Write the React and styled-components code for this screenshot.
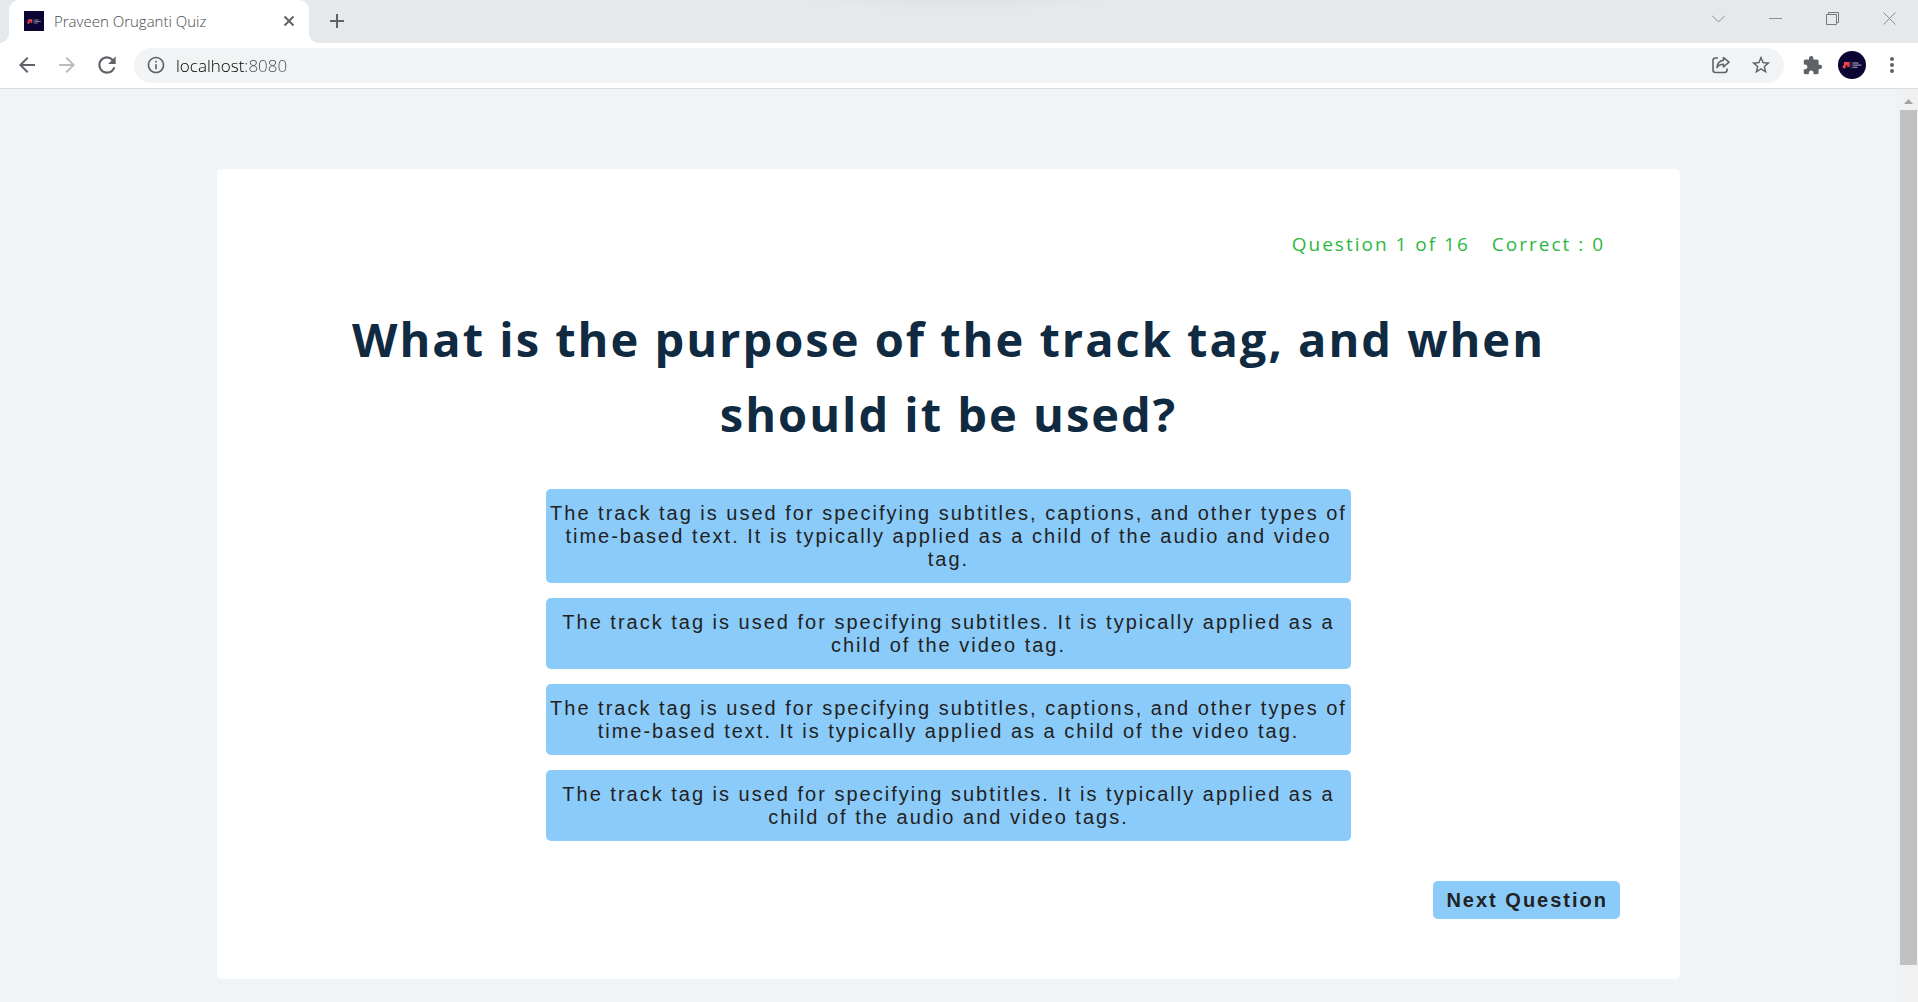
import React, { useState } from "react";
import styled, { createGlobalStyle, css } from "styled-components";
import {
  MdArrowBack,
  MdArrowForward,
  MdRefresh,
  MdInfoOutline,
  MdStarBorder,
  MdExtension,
} from "react-icons/md";

const uiFont = '"Open Sans", "Noto Sans", sans-serif';
const buttonFont = '"Liberation Sans", Arial, sans-serif';

const GlobalStyle = createGlobalStyle`
  *, *::before, *::after { box-sizing: border-box; }
  body { margin: 0; background: #f0f4f7; font-family: ${uiFont}; }
  button, input { font: inherit; margin: 0; padding: 0; border: 0; background: none; }
`;

const Window = styled.div`
  display: flex;
  flex-direction: column;
  height: 100vh;
  overflow: hidden;
`;

/* ---------- tab strip ---------- */

const TabStrip = styled.header`
  display: flex;
  align-items: stretch;
  flex: none;
  height: 43px;
  padding-left: 9px;
  background:
    radial-gradient(ellipse 150px 10px at 50% 0, #dde1e5, #e5e9ec) no-repeat,
    #e5e9ec;
`;

const Tab = styled.div`
  position: relative;
  display: flex;
  align-items: center;
  width: 300px;
  padding: 0 14px 2px 15px;
  border-radius: 10px 10px 0 0;
  background: #fff;

  &::before,
  &::after {
    content: "";
    position: absolute;
    bottom: 0;
    width: 10px;
    height: 10px;
  }
  &::before {
    right: 100%;
    background: radial-gradient(circle at 0 0, transparent 10px, #fff 10px);
  }
  &::after {
    left: 100%;
    background: radial-gradient(circle at 100% 0, transparent 10px, #fff 10px);
  }
`;

const TabTitle = styled.span`
  flex: 1;
  margin-left: 10px;
  font-size: 15px;
  line-height: 20px;
  font-weight: 300;
  color: #45494d;
`;

const IconButton = styled.button`
  display: flex;
  align-items: center;
  justify-content: center;
  flex: none;
  width: ${(p) => p.$width || 40}px;
  height: ${(p) => p.$height || 35}px;
  color: ${(p) => p.$color || "#5f6368"};
  svg { display: block; }
`;

const NewTabSlot = styled.div`
  display: flex;
  align-items: center;
  padding: 0 0 2px 8px;
`;

const WindowControls = styled.div`
  display: flex;
  align-items: center;
  margin-left: auto;
  padding-bottom: 6px;
`;

/* ---------- toolbar ---------- */

const Toolbar = styled.nav`
  display: flex;
  align-items: center;
  flex: none;
  height: 46px;
  padding: 0 6px 1px 7px;
  border-bottom: 1px solid #d9dcdf;
  background: #fff;
`;

const AddressBar = styled.div`
  display: flex;
  align-items: center;
  flex: 1;
  height: 35px;
  margin: 0 8px 0 7px;
  padding: 0 3px 0 12px;
  border-radius: 18px;
  background: #f1f3f4;
`;

const AddressInput = styled.input`
  flex: 1;
  min-width: 0;
  height: 24px;
  margin-left: 10px;
  font-size: 17px;
  font-weight: 300;
  color: #2a2d31;
  -webkit-text-fill-color: transparent;
  background: linear-gradient(90deg, #000 70px, #45494d 70px);
  -webkit-background-clip: text;
  background-clip: text;
  outline: none;
`;

/* ---------- page ---------- */

const Viewport = styled.div`
  display: flex;
  flex: 1;
  min-height: 0;
`;

const Page = styled.main`
  flex: 1;
  padding-top: 80px;
  overflow: hidden;
`;

const Card = styled.section`
  width: 90%;
  max-width: 1463px;
  margin: 0 auto;
  padding: 60px;
  border-radius: 5px;
  background: #fff;
`;

const Score = styled.p`
  display: flex;
  justify-content: flex-end;
  gap: 22px;
  margin: 0;
  padding-right: 15px;
  font-size: 19px;
  line-height: 31px;
  letter-spacing: 2px;
  color: #2cb840;
`;

const Question = styled.h1`
  margin: 42px 0 37px;
  font-size: 47px;
  line-height: 75px;
  font-weight: 700;
  letter-spacing: 2px;
  text-align: center;
  color: #102a42;
`;

const Answers = styled.div`
  display: grid;
  gap: 15px;
  width: 60%;
  margin: 0 auto;
`;

const buttonBase = css`
  border-radius: 5px;
  background: #8bcbf9;
  color: #222;
  font-family: ${buttonFont};
  font-size: 20px;
  line-height: 23px;
  letter-spacing: 2px;
  cursor: pointer;
`;

const Answer = styled.button`
  ${buttonBase}
  padding: 13px 2px 12px;
  text-align: center;
`;

const Footer = styled.div`
  display: flex;
  justify-content: flex-end;
  margin-top: 40px;
`;

const NextButton = styled.button`
  ${buttonBase}
  padding: 8px 12px 7px 13px;
  font-weight: 700;
`;

/* ---------- scrollbar ---------- */

const ScrollTrack = styled.div`
  display: flex;
  flex-direction: column;
  flex: none;
  width: 21px;
  padding: 0 1px 0 3px;
  background: #f1f1f1;
`;

const ScrollArrow = styled.div`
  display: flex;
  align-items: center;
  justify-content: center;
  height: 21px;
  padding-top: 3px;
`;

const ScrollThumb = styled.div`
  height: 96%;
  max-height: 855px;
  background: #c1c1c1;
`;

/* ---------- drawings ---------- */

const Line = ({ d, size, width = 1, ...rest }) => (
  <svg width={size} height={size} viewBox={`0 0 ${size} ${size}`} fill="none" stroke="currentColor" strokeWidth={width} {...rest}>
    <path d={d} />
  </svg>
);

const Mark = () => (
  <g>
    <path d="M11 10h11v10h-4.500v-4H11z" fill="#f0444b" />
    <circle cx="11.500" cy="19.500" r="3.500" fill="#f0444b" />
    <path d="M13 18.500l4-4" stroke="#f0444b" strokeWidth="2" />
    <path d="M25 9v15" stroke="#77738f" strokeWidth="1" />
    <path d="M28 12h12M28 16.200h18M28 20.500h10" stroke="#b9b6c8" strokeWidth="2" />
  </g>
);

const Favicon = () => (
  <svg width="20" height="20" viewBox="0 0 56 56" aria-hidden="true">
    <rect width="56" height="56" fill="#0c0433" />
    <g transform="translate(1 13)"><Mark /></g>
  </svg>
);

const Avatar = () => (
  <svg width="28" height="28" viewBox="0 0 56 56" aria-hidden="true">
    <circle cx="28" cy="28" r="28" fill="#0c0433" />
    <g transform="translate(1 12)"><Mark /></g>
  </svg>
);

const ShareIcon = () => (
  <svg width="20" height="20" viewBox="0 0 20 20" fill="none" stroke="currentColor" strokeWidth="1.600" strokeLinejoin="round">
    <path d="M7 3H4.500A2.500 2.500 0 0 0 2 5.500v9.500A2.500 2.500 0 0 0 4.500 17.500h9a2.500 2.500 0 0 0 2.500-2.500v-1.500" />
    <path d="M12.500 2.500l5.500 4.700-5.500 4.800V9.300c-3 0-5 .9-6.500 3.200.3-4 2.700-6.700 6.500-7.200z" />
  </svg>
);

const DotsIcon = () => (
  <svg width="6" height="18" viewBox="0 0 6 18" fill="currentColor">
    <circle cx="3" cy="3" r="2" />
    <circle cx="3" cy="9" r="2" />
    <circle cx="3" cy="15" r="2" />
  </svg>
);

const answers = [
  "The track tag is used for specifying subtitles, captions, and other types of time-based text. It is typically applied as a child of the audio and video tag.",
  "The track tag is used for specifying subtitles. It is typically applied as a child of the video tag.",
  "The track tag is used for specifying subtitles, captions, and other types of time-based text. It is typically applied as a child of the video tag.",
  "The track tag is used for specifying subtitles. It is typically applied as a child of the audio and video tags.",
];

export default function App() {
  const [url, setUrl] = useState("localhost:8080");

  return (
    <Window>
      <GlobalStyle />
      <TabStrip>
        <Tab>
          <Favicon />
          <TabTitle>Praveen Oruganti Quiz</TabTitle>
          <IconButton $width={12} $height={12} aria-label="Close tab">
            <Line size={12} width={2} d="M1.500 1.500l9 9M10.500 1.500l-9 9" />
          </IconButton>
        </Tab>
        <NewTabSlot>
          <IconButton aria-label="New tab">
            <Line size={16} width={2} d="M8 1v14M1 8h14" />
          </IconButton>
        </NewTabSlot>
        <WindowControls>
          <IconButton $width={57} $color="#8b8e91" aria-label="Search tabs">
            <Line size={13} d="M0 3.500l6.500 6.500L13 3.500" />
          </IconButton>
          <IconButton $width={57} $color="#8b8e91" aria-label="Minimize">
            <Line size={13} d="M0 6.500h13" />
          </IconButton>
          <IconButton $width={57} $color="#77797c" aria-label="Restore">
            <Line size={13} d="M0.500 2.500h10v10h-10zM2.500 2.500v-2h10v10h-2" />
          </IconButton>
          <IconButton $width={57} $color="#8b8e91" aria-label="Close window">
            <Line size={13} d="M0.500 0.500l12 12M12.500 0.500l-12 12" />
          </IconButton>
        </WindowControls>
      </TabStrip>

      <Toolbar>
        <IconButton aria-label="Back"><MdArrowBack size={24} /></IconButton>
        <IconButton $color="#babcbe" aria-label="Forward"><MdArrowForward size={24} /></IconButton>
        <IconButton aria-label="Reload"><MdRefresh size={26} /></IconButton>
        <AddressBar>
          <IconButton $width={20} aria-label="Site information"><MdInfoOutline size={20} /></IconButton>
          <AddressInput aria-label="Address" value={url} onChange={(e) => setUrl(e.target.value)} spellCheck={false} />
          <IconButton aria-label="Share"><ShareIcon /></IconButton>
          <IconButton aria-label="Bookmark"><MdStarBorder size={22} /></IconButton>
        </AddressBar>
        <IconButton aria-label="Extensions"><MdExtension size={21} /></IconButton>
        <IconButton aria-label="Profile"><Avatar /></IconButton>
        <IconButton aria-label="Menu"><DotsIcon /></IconButton>
      </Toolbar>

      <Viewport>
        <Page>
          <Card>
            <Score>
              <span>Question 1 of 16</span>
              <span>Correct : 0</span>
            </Score>
            <Question>What is the purpose of the track tag, and when should it be used?</Question>
            <Answers>
              {answers.map((text) => (
                <Answer key={text}>{text}</Answer>
              ))}
            </Answers>
            <Footer>
              <NextButton>Next Question</NextButton>
            </Footer>
          </Card>
        </Page>
        <ScrollTrack aria-hidden="true">
          <ScrollArrow>
            <svg width="9" height="5" viewBox="0 0 9 5"><path d="M0 5L4.500 0 9 5z" fill="#a3a3a3" /></svg>
          </ScrollArrow>
          <ScrollThumb />
        </ScrollTrack>
      </Viewport>
    </Window>
  );
}
